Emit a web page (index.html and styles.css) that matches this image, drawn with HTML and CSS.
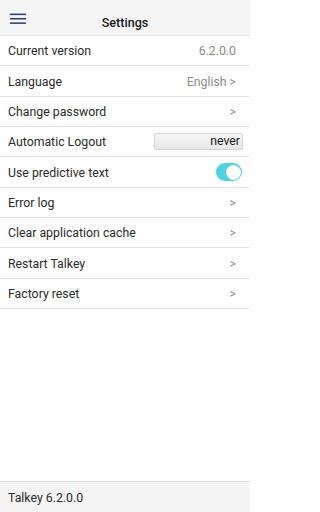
FILE: index.html
```html
<!DOCTYPE html>
<html>
<head>
<meta charset="utf-8">
<link rel="stylesheet" href="styles.css">
</head>
<body>
<div class="app">
  <header class="topbar">
    <svg class="menu" width="16" height="12" viewBox="0 0 16 12">
      <rect x="0" y="0.6" width="16" height="1.5" fill="#2e3a6e"/>
      <rect x="0" y="5" width="16" height="1.5" fill="#2e3a6e"/>
      <rect x="0" y="9.4" width="16" height="1.5" fill="#2e3a6e"/>
    </svg>
    <div class="title">Settings</div>
  </header>
  <main class="list">
    <div class="row"><span class="label">Current version</span><span class="value">6.2.0.0</span></div>
    <div class="row"><span class="label">Language</span><span class="value">English &gt;</span></div>
    <div class="row"><span class="label">Change password</span><span class="value">&gt;</span></div>
    <div class="row"><span class="label">Automatic Logout</span><span class="select">never</span></div>
    <div class="row"><span class="label">Use predictive text</span><span class="toggle"><span class="knob"></span></span></div>
    <div class="row"><span class="label">Error log</span><span class="value">&gt;</span></div>
    <div class="row"><span class="label">Clear application cache</span><span class="value">&gt;</span></div>
    <div class="row"><span class="label">Restart Talkey</span><span class="value">&gt;</span></div>
    <div class="row"><span class="label">Factory reset</span><span class="value">&gt;</span></div>
  </main>
  <footer class="footer">Talkey 6.2.0.0</footer>
</div>
</body>
</html>
```
FILE: styles.css
```css
html, body {
  margin: 0;
  padding: 0;
  background: #ffffff;
}
body {
  font-family: Roboto, "Liberation Sans", sans-serif;
  color: #2a2a2a;
}
.app {
  width: 250px;
  height: 512px;
  display: flex;
  flex-direction: column;
}
.topbar {
  height: 36px;
  box-sizing: border-box;
  background: #f5f5f5;
  border-bottom: 1px solid #e2e2e2;
  display: flex;
  align-items: center;
  position: relative;
}
.menu {
  margin-left: 10px;
  margin-top: 2px;
}
.title {
  position: absolute;
  left: 0;
  right: 0;
  text-align: center;
  font-size: 12.6px;
  font-weight: 500;
  color: #1a1a1a;
  pointer-events: none;
  top: 14.5px;
}
.list {
  flex: 1;
}
.row {
  height: 30.35px;
  box-sizing: border-box;
  border-bottom: 1px solid #e4e4e4;
  display: flex;
  align-items: center;
  justify-content: space-between;
  padding: 1px 14px 0 8px;
  font-size: 12.3px;
}
.label {
  color: #2a2a2a;
}
.value {
  color: #8a8a8a;
  font-size: 12.3px;
}
.select {
  width: 89px;
  height: 17px;
  box-sizing: border-box;
  margin-right: -7px;
  margin-top: -1px;
  border: 1px solid #d4d4d4;
  border-radius: 2px;
  background: linear-gradient(#f7f7f7, #e6e6e6);
  text-align: right;
  padding-right: 2px;
  font-size: 12.3px;
  line-height: 15px;
  color: #1a1a1a;
}
.toggle {
  width: 26px;
  height: 18px;
  border-radius: 9px;
  background: #4dd3e3;
  margin-right: -6px;
  margin-top: -1px;
  display: flex;
  justify-content: flex-end;
  align-items: center;
  padding: 0 1px;
  box-sizing: border-box;
}
.knob {
  width: 15px;
  height: 15px;
  border-radius: 50%;
  background: #ffffff;
  box-shadow: 0 0 1px rgba(0,0,0,0.2);
}
.footer {
  height: 31px;
  box-sizing: border-box;
  background: #f4f4f4;
  border-top: 1px solid #dcdcdc;
  padding: 1px 8px 0;
  display: flex;
  align-items: center;
  font-size: 12.3px;
  color: #2a2a2a;
}
```
